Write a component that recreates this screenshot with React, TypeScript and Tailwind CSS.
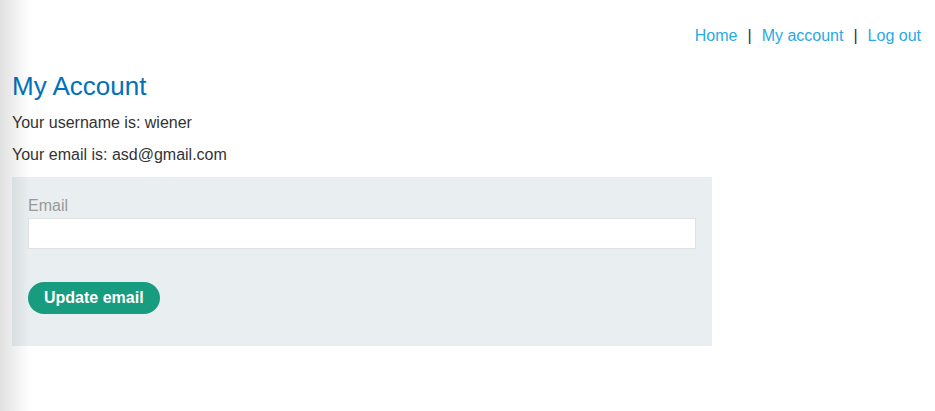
export default function App() {
  return (
    <div className="relative min-h-screen bg-white font-['Liberation_Sans',Arial,sans-serif] text-[#333332]">
      <header className="flex justify-end items-center gap-[10px] pt-[27px] pr-[14px] text-base leading-[18px]">
        <a href="#" className="text-[#29a9e6]">Home</a>
        <span className="text-[#333]">|</span>
        <a href="#" className="text-[#29a9e6]">My account</a>
        <span className="text-[#333]">|</span>
        <a href="#" className="text-[#29a9e6]">Log out</a>
      </header>
      <main className="px-[12px]">
        <h1 className="mt-[26px] text-[26px] leading-[30px] text-[#0071bc]">My Account</h1>
        <p className="mt-[13px] text-base leading-[18px]">Your username is: wiener</p>
        <p className="mt-[14px] text-base leading-[18px]">Your email is: asd@gmail.com</p>
        <form className="mt-[13px] w-[700px] bg-[#e9eff1] px-[16px] pt-[20px] pb-[32px]">
          <label className="block text-base leading-[18px] text-[#999]">Email</label>
          <input
            type="email"
            className="mt-[3px] block h-[31px] w-full border border-[#e0e2e2] bg-white px-2 outline-none"
          />
          <button
            type="button"
            className="mt-[33px] h-[32px] rounded-full bg-[#189c80] px-[16px] text-base font-bold text-white"
          >
            Update email
          </button>
        </form>
      </main>
      <div className="pointer-events-none absolute inset-y-0 left-0 w-[30px] bg-gradient-to-r from-black/12 to-transparent" />
    </div>
  )
}
